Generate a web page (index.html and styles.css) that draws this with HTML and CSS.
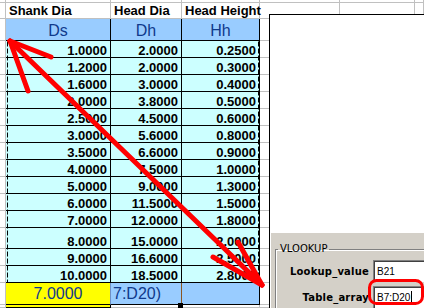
FILE: index.html
```html
<!DOCTYPE html>
<html>
<head>
<meta charset="utf-8">
<link rel="stylesheet" href="styles.css">
</head>
<body>
<div class="sheet">
  <div class="c"></div><div class="c"></div><div class="c"></div><div class="c"></div><div class="c"></div><div class="c"></div><div class="c"></div>

  <div class="c"></div><div class="c h">Shank Dia</div><div class="c h">Head Dia</div><div class="c h">Head Height</div><div class="c"></div><div class="c"></div><div class="c"></div>

  <div class="c"></div><div class="c b hd">Ds</div><div class="c b hd">Dh</div><div class="c b hd">Hh</div><div class="c"></div><div class="c"></div><div class="c"></div>

  <div class="c"></div><div class="c b n">1.0000</div><div class="c b n">2.0000</div><div class="c b n">0.2500</div><div class="c"></div><div class="c"></div><div class="c"></div>
  <div class="c"></div><div class="c b n">1.2000</div><div class="c b n">2.0000</div><div class="c b n">0.3000</div><div class="c"></div><div class="c"></div><div class="c"></div>
  <div class="c"></div><div class="c b n">1.6000</div><div class="c b n">3.0000</div><div class="c b n">0.4000</div><div class="c"></div><div class="c"></div><div class="c"></div>
  <div class="c"></div><div class="c b n">2.0000</div><div class="c b n">3.8000</div><div class="c b n">0.5000</div><div class="c"></div><div class="c"></div><div class="c"></div>
  <div class="c"></div><div class="c b n">2.5000</div><div class="c b n">4.5000</div><div class="c b n">0.6000</div><div class="c"></div><div class="c"></div><div class="c"></div>
  <div class="c"></div><div class="c b n">3.0000</div><div class="c b n">5.6000</div><div class="c b n">0.8000</div><div class="c"></div><div class="c"></div><div class="c"></div>
  <div class="c"></div><div class="c b n">3.5000</div><div class="c b n">6.6000</div><div class="c b n">0.9000</div><div class="c"></div><div class="c"></div><div class="c"></div>
  <div class="c"></div><div class="c b n">4.0000</div><div class="c b n">7.5000</div><div class="c b n">1.0000</div><div class="c"></div><div class="c"></div><div class="c"></div>
  <div class="c"></div><div class="c b n">5.0000</div><div class="c b n">9.0000</div><div class="c b n">1.3000</div><div class="c"></div><div class="c"></div><div class="c"></div>
  <div class="c"></div><div class="c b n">6.0000</div><div class="c b n">11.5000</div><div class="c b n">1.5000</div><div class="c"></div><div class="c"></div><div class="c"></div>
  <div class="c"></div><div class="c b n">7.0000</div><div class="c b n">12.0000</div><div class="c b n">1.8000</div><div class="c"></div><div class="c"></div><div class="c"></div>
  <div class="c"></div><div class="c b n">8.0000</div><div class="c b n">15.0000</div><div class="c b n">2.0000</div><div class="c"></div><div class="c"></div><div class="c"></div>
  <div class="c"></div><div class="c b n">9.0000</div><div class="c b n">16.6000</div><div class="c b n">2.5000</div><div class="c"></div><div class="c"></div><div class="c"></div>
  <div class="c"></div><div class="c b n">10.0000</div><div class="c b n">18.5000</div><div class="c b n">2.8000</div><div class="c"></div><div class="c"></div><div class="c"></div>

  <div class="c"></div><div class="c b yl">7.0000</div><div class="c b ed">7:D20)</div><div class="c b lb"></div><div class="c"></div><div class="c"></div><div class="c"></div>

  <div class="c"></div><div class="c b yl2"></div><div class="c"></div><div class="c"></div><div class="c"></div><div class="c"></div><div class="c"></div>
</div>

<div class="win">
  <div class="blank"></div>
  <div class="dlg">
    <fieldset class="grp">
      <legend>VLOOKUP</legend>
      <div class="arg"><span class="lbl">Lookup_value</span><span class="inp">B21</span></div>
      <div class="arg"><span class="lbl">Table_array</span><span class="inp">B7:D20<span class="caret"></span></span></div>
    </fieldset>
  </div>
</div>

<svg class="ink" width="424" height="308" viewBox="0 0 424 308">
  <rect x="7.5" y="40.5" width="251" height="242" fill="none" stroke="#000" stroke-width="1" stroke-dasharray="5 2"/>
  <line x1="181.5" y1="283" x2="181.5" y2="303" stroke="#8a5522" stroke-width="1"/>
  <rect x="178" y="303" width="5" height="5" fill="#000"/>
  <g stroke="#ff0000" stroke-width="5" stroke-linecap="round" fill="none">
    <line x1="10" y1="41" x2="262" y2="285"/>
    <line x1="10" y1="41" x2="51" y2="57"/>
    <line x1="10" y1="41" x2="28" y2="91"/>
    <line x1="213" y1="257" x2="262" y2="285"/>
    <line x1="238" y1="242" x2="262" y2="285"/>
  </g>
  <rect x="369.5" y="280.5" width="53" height="23" rx="7" fill="none" stroke="#ff0000" stroke-width="3"/>
</svg>
</body>
</html>
```

FILE: styles.css
```css
* { box-sizing: border-box; }
html, body { margin: 0; padding: 0; }
body {
  width: 424px;
  height: 308px;
  overflow: hidden;
  position: relative;
  background: #fff;
  font-family: "Liberation Sans", Arial, sans-serif;
  color: #000;
}

.sheet {
  display: grid;
  grid-template-columns: 6px 105px 71px 78px 80px 75px 1fr;
  grid-template-rows: 3px 16px 22px repeat(11, 17px) 21px 17px 17px 22px 3px;
  height: 308px;
  overflow: hidden;
}

.c {
  border-right: 1px solid #c0c0c0;
  border-bottom: 1px solid #c0c0c0;
  white-space: nowrap;
  min-width: 0;
}
.b { border-color: #000; }

.h {
  font-weight: bold;
  font-size: 13px;
  line-height: 15px;
  padding-left: 3px;
}

.hd {
  background: #99ccff;
  color: #103a8c;
  font-size: 16px;
  display: flex;
  align-items: flex-end;
  justify-content: center;
  line-height: 18px;
}

.n {
  background: #ccffff;
  font-weight: bold;
  font-size: 13px;
  display: flex;
  align-items: flex-end;
  justify-content: flex-end;
  line-height: 12px;
  padding-right: 3px;
}

.yl {
  background: #ffff00;
  color: #103a8c;
  font-size: 16px;
  line-height: 16px;
  display: flex;
  align-items: center;
  justify-content: center;
  border-right-color: #6f8fc4;
}
.yl2 { background: #ffff00; }

.ed {
  background: #99ccff;
  color: #103a8c;
  font-size: 16px;
  line-height: 16px;
  display: flex;
  align-items: center;
  padding-left: 2px;
  overflow: hidden;
  border-right-color: #99ccff;
}
.lb { background: #99ccff; }

.win {
  position: absolute;
  left: 269px;
  top: 14px;
  right: 0;
  bottom: 0;
  border-left: 1px solid #000;
  border-top: 1px solid #000;
  background: #fff;
  display: flex;
  flex-direction: column;
  overflow: hidden;
}
.blank { height: 217px; flex: none; }

.dlg {
  flex: 1;
  background: #d4d0c8;
  box-shadow: inset 1px 1px 0 #fff;
  padding: 11px 0 0 5px;
  overflow: hidden;
}

.grp {
  margin: 0;
  padding: 3px 0 0 0;
  border: 1px solid #808080;
  border-right: none;
  border-bottom: none;
  box-shadow: inset 1px 1px 0 #fff;
  font-family: "DejaVu Sans", Tahoma, sans-serif;
  font-size: 10px;
  height: 80px;
}
.grp legend {
  padding: 0 2px;
  margin-left: 2px;
  line-height: 12px;
}

.arg {
  display: flex;
  align-items: center;
  height: 26px;
}
.lbl {
  width: 93px;
  flex: none;
  text-align: right;
  font-weight: bold;
  letter-spacing: 0.2px;
}
.inp {
  margin-left: 4px;
  flex: 1;
  height: 22px;
  background: #fff;
  border-top: 1px solid #808080;
  border-left: 1px solid #808080;
  box-shadow: inset 1px 1px 0 #404040;
  font-family: "Liberation Sans", Arial, sans-serif;
  font-size: 10px;
  line-height: 20px;
  padding-left: 3px;
  display: flex;
  align-items: center;
}
.caret {
  display: inline-block;
  width: 1px;
  height: 13px;
  background: #000;
  margin-left: 1px;
}

.ink {
  position: absolute;
  left: 0;
  top: 0;
  pointer-events: none;
}
```
